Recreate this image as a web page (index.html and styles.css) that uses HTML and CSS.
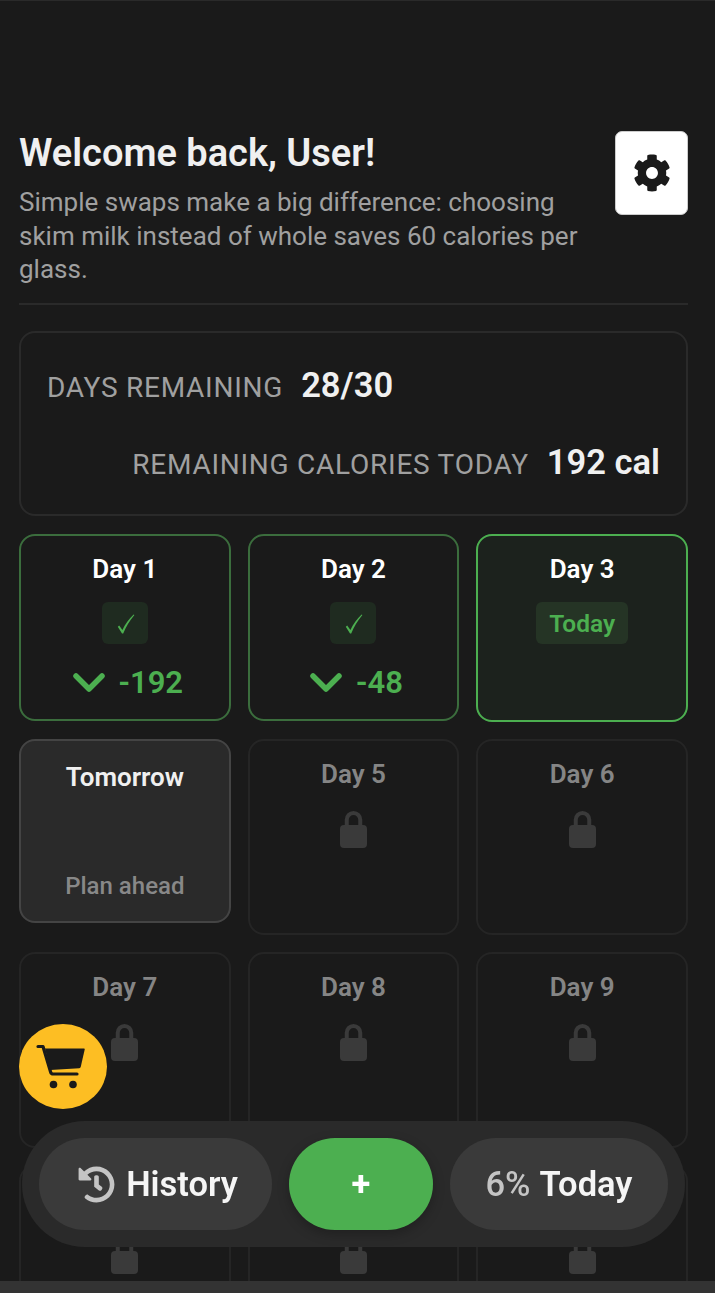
FILE: index.html
```html
<!DOCTYPE html>
<html lang="en">
<head>
  <meta charset="UTF-8" />
  <meta name="viewport" content="width=device-width, initial-scale=1" />
  <title>Dashboard</title>
  <link rel="stylesheet" href="styles.css">
</head>
<body>
  <div class="page">
    <header class="top">
      <div class="top-text">
        <h1>Welcome back, User!</h1>
        <p>Simple swaps make a big difference: choosing skim milk instead of whole saves 60 calories per glass.</p>
      </div>
      <button class="settings" aria-label="Settings">
        <svg viewBox="0 0 512 512" width="38" height="38"><path fill="#1a1a1a" d="M487.4 315.7l-42.6-24.6c4.3-23.2 4.3-47 0-70.2l42.6-24.6c4.9-2.8 7.1-8.6 5.5-14-11.1-35.6-30-67.8-54.7-94.6-3.8-4.1-10-5.1-14.8-2.3L380.8 110c-17.9-15.4-38.5-27.3-60.8-35.1V25.8c0-5.6-3.9-10.5-9.4-11.7-36.7-8.2-74.3-7.8-109.2 0-5.5 1.2-9.4 6.1-9.4 11.7V75c-22.2 7.9-42.8 19.8-60.8 35.1L88.7 85.5c-4.9-2.8-11-1.9-14.8 2.3-24.7 26.7-43.6 58.9-54.7 94.6-1.7 5.4.6 11.2 5.5 14L67.3 221c-4.3 23.2-4.3 47 0 70.2l-42.6 24.6c-4.9 2.8-7.1 8.6-5.5 14 11.1 35.6 30 67.8 54.7 94.6 3.8 4.1 10 5.1 14.8 2.3l42.6-24.6c17.9 15.4 38.5 27.3 60.8 35.1v49.2c0 5.6 3.9 10.5 9.4 11.7 36.7 8.2 74.3 7.8 109.2 0 5.5-1.2 9.4-6.1 9.4-11.7v-49.2c22.2-7.9 42.8-19.8 60.8-35.1l42.6 24.6c4.9 2.8 11 1.9 14.8-2.3 24.7-26.7 43.6-58.9 54.7-94.6 1.5-5.5-.7-11.3-5.6-14.1zM256 336c-44.1 0-80-35.9-80-80s35.9-80 80-80 80 35.9 80 80-35.9 80-80 80z"/></svg>
      </button>
    </header>

    <section class="stats">
      <div class="stat stat-left"><span class="stat-label">Days remaining</span><span class="stat-value">28/30</span></div>
      <div class="stat stat-right"><span class="stat-label">Remaining calories today</span><span class="stat-value">192 cal</span></div>
    </section>

    <section class="days">
      <div class="day day-done">
        <div class="day-title">Day 1</div>
        <div class="check"><svg viewBox="0 0 18 20" width="18" height="20"><path d="M.8 12.800 2.200 11.600 5.400 16C8 10 12 5 16.600.4L17.400 1C12.500 7 8.800 13 6.200 19.600H5z"/></svg></div>
        <div class="delta"><svg class="chev" viewBox="0 0 32 19" width="32" height="19"><path d="M3 3l13 13L29 3"/></svg><span>-192</span></div>
      </div>
      <div class="day day-done">
        <div class="day-title">Day 2</div>
        <div class="check"><svg viewBox="0 0 18 20" width="18" height="20"><path d="M.8 12.800 2.200 11.600 5.400 16C8 10 12 5 16.600.4L17.400 1C12.500 7 8.800 13 6.200 19.600H5z"/></svg></div>
        <div class="delta"><svg class="chev" viewBox="0 0 32 19" width="32" height="19"><path d="M3 3l13 13L29 3"/></svg><span>-48</span></div>
      </div>
      <div class="day day-today">
        <div class="day-title">Day 3</div>
        <div class="today-tag">Today</div>
      </div>

      <div class="day day-next">
        <div class="day-title">Tomorrow</div>
        <div class="plan">Plan ahead</div>
      </div>
      <div class="day day-locked">
        <div class="day-title">Day 5</div>
        <svg class="lock" viewBox="0 0 27 37" width="27" height="37"><use href="#lock-shape"/></svg>
      </div>
      <div class="day day-locked">
        <div class="day-title">Day 6</div>
        <svg class="lock" viewBox="0 0 27 37" width="27" height="37"><use href="#lock-shape"/></svg>
      </div>

      <div class="day day-locked">
        <div class="day-title">Day 7</div>
        <svg class="lock" viewBox="0 0 27 37" width="27" height="37"><use href="#lock-shape"/></svg>
      </div>
      <div class="day day-locked">
        <div class="day-title">Day 8</div>
        <svg class="lock" viewBox="0 0 27 37" width="27" height="37"><use href="#lock-shape"/></svg>
      </div>
      <div class="day day-locked">
        <div class="day-title">Day 9</div>
        <svg class="lock" viewBox="0 0 27 37" width="27" height="37"><use href="#lock-shape"/></svg>
      </div>

      <div class="day day-locked">
        <div class="day-title">Day 10</div>
        <svg class="lock" viewBox="0 0 27 37" width="27" height="37"><use href="#lock-shape"/></svg>
      </div>
      <div class="day day-locked">
        <div class="day-title">Day 11</div>
        <svg class="lock" viewBox="0 0 27 37" width="27" height="37"><use href="#lock-shape"/></svg>
      </div>
      <div class="day day-locked">
        <div class="day-title">Day 12</div>
        <svg class="lock" viewBox="0 0 27 37" width="27" height="37"><use href="#lock-shape"/></svg>
      </div>
    </section>
  </div>
  <div class="strip"></div>

  <!-- floating stuff -->
  <button class="cart" aria-label="Shopping list">
    <svg viewBox="0 0 50 46" width="50" height="46">
      <path class="cart-line" d="M2 2.500h5l7.600 25.500c.4 1.300 1.200 2 2.500 2H41"/>
      <path d="M9 4.500h38.800c.6 0 1 .5.900 1.100l-4 17.500c-.2.700-.7 1.100-1.400 1.200l-29 1.700z"/>
      <circle cx="17.500" cy="40.500" r="3.800"/>
      <circle cx="37" cy="40.500" r="3.800"/>
    </svg>
  </button>

  <nav class="bar">
    <button class="pill pill-history">
      <svg viewBox="0 0 512 512" width="37" height="37"><path fill="#c4c4c4" d="M504 255.531c.253 136.64-111.18 248.372-247.82 248.468-59.015.042-113.223-20.53-155.822-54.911-11.077-8.94-11.905-25.541-1.839-35.607l11.267-11.267c8.609-8.609 22.353-9.551 31.891-1.984C173.062 425.135 212.781 440 256 440c101.705 0 184-82.311 184-184 0-101.705-82.311-184-184-184-48.814 0-93.149 18.969-126.068 49.932l50.754 50.754c10.08 10.08 2.941 27.314-11.313 27.314H24c-8.837 0-16-7.163-16-16V38.627c0-14.254 17.234-21.393 27.314-11.314l49.372 49.372C129.209 34.136 189.552 8 256 8c136.81 0 247.747 110.78 248 247.531zm-180.912 78.784l9.823-12.63c8.138-10.463 6.253-25.542-4.21-33.679L288 256.349V152c0-13.255-10.745-24-24-24h-16c-13.255 0-24 10.745-24 24v135.651l65.409 50.874c10.463 8.137 25.541 6.253 33.679-4.21z"/></svg>
      <span>History</span>
    </button>
    <button class="pill pill-add">+</button>
    <button class="pill pill-today"><span class="pct">6%</span> Today</button>
  </nav>

  <svg class="defs" width="0" height="0">
    <symbol id="lock-shape" viewBox="0 0 27 37">
      <path fill="none" stroke="#3a3a3a" stroke-width="4" d="M6.750 16V8.750a6.750 6.750 0 0 1 13.500 0V16"/>
      <rect x="0" y="14" width="27" height="23" rx="4" fill="#3a3a3a"/>
    </symbol>
  </svg>
</body>
</html>
```

FILE: styles.css
```css
* {
  box-sizing: border-box;
}
html,
body {
  margin: 0;
  height: 100%;
}
body {
  display: flex;
  flex-direction: column;
  height: 1293px;
  overflow: hidden;
  background: #1a1a1a;
  border-top: 1px solid #2a2a2a;
  color: #f0f0f0;
  font-family: Roboto, sans-serif;
}
button {
  font-family: inherit;
  border: none;
  cursor: pointer;
}
.page {
  flex: 1;
  min-height: 0;
  overflow: hidden;
  padding: 130px 27px 0 19px;
}
.strip {
  height: 12px;
  flex-shrink: 0;
  background: #333;
}
.defs {
  position: absolute;
}

/* header */
.top {
  display: flex;
  justify-content: space-between;
  align-items: flex-start;
  gap: 20px;
  padding-bottom: 16px;
  border-bottom: 2px solid #2a2a2a;
}
.top h1 {
  margin: 0 0 11px;
  font-size: 38px;
  line-height: 44px;
  font-weight: 600;
  color: #f0f0f0;
}
.top p {
  margin: 0;
  font-size: 26px;
  line-height: 33.500px;
  color: #a0a0a0;
}
.settings {
  flex-shrink: 0;
  display: flex;
  align-items: center;
  justify-content: center;
  width: 73px;
  height: 84px;
  padding: 0;
  background: #fff;
  border: 1px solid #ccc;
  border-radius: 7px;
}

/* stats card */
.stats {
  margin-top: 26px;
  height: 185px;
  padding: 32px 26px 14px;
  border: 2px solid #2a2a2a;
  border-radius: 16px;
  display: flex;
  flex-direction: column;
  gap: 37px;
}
.stat {
  display: flex;
  align-items: baseline;
  gap: 18px;
}
.stat-right {
  justify-content: flex-end;
}
.stat-label {
  font-size: 28px;
  letter-spacing: 0.75px;
  color: #a0a0a0;
  text-transform: uppercase;
}
.stat-value {
  font-size: 34.500px;
  font-weight: 600;
  color: #f0f0f0;
}

/* day grid */
.days {
  margin-top: 18px;
  display: grid;
  grid-template-columns: repeat(3, 1fr);
  gap: 17px;
}
.day {
  display: flex;
  flex-direction: column;
  align-items: center;
  border: 2px solid #2a2a2a;
  border-radius: 16px;
  padding: 17px 10px;
}
.day-title {
  font-size: 26px;
  line-height: 32px;
  font-weight: 600;
  color: #fff;
}
.day-done {
  height: 187px;
  border-color: #3b6d3d;
}
.check {
  width: 46px;
  height: 45px;
  margin-top: 17px;
  display: flex;
  align-items: center;
  justify-content: center;
  background: #1f2b20;
  border-radius: 6px;
}
.check svg {
  fill: #4caf50;
  margin-left: 2px;
  margin-top: 3px;
}
.delta {
  margin-top: 20px;
  margin-left: 6px;
  display: flex;
  align-items: center;
  gap: 14px;
  font-size: 31px;
  line-height: 38px;
  font-weight: 600;
  color: #4caf50;
}
.chev {
  fill: none;
  stroke: #4caf50;
  stroke-width: 5.500;
  stroke-linecap: round;
  stroke-linejoin: round;
}
.day-today {
  height: 188px;
  background: #1c221d;
  border-color: #4caf50;
}
.today-tag {
  margin-top: 17px;
  padding: 4px 13px 2px;
  background: #253425;
  border-radius: 6px;
  color: #4caf50;
  font-size: 24.500px;
  line-height: 36px;
  font-weight: 600;
}
.day-next {
  align-self: start;
  height: 184px;
  padding: 20px 10px;
  justify-content: space-between;
  background: #2a2a2a;
  border-color: #444;
}
.day-next .day-title {
  color: #f0f0f0;
}
.plan {
  font-size: 24px;
  line-height: 30px;
  font-weight: 500;
  color: #888;
}
.day-locked {
  min-height: 196px;
  border-color: #252525;
}
.day-locked .day-title {
  color: #858585;
}
.lock {
  margin-top: 21px;
}

/* overlays */
.cart {
  position: fixed;
  left: 19px;
  top: 1024px;
  width: 88px;
  height: 85px;
  padding: 0 4px 0 0;
  display: flex;
  align-items: center;
  justify-content: center;
  border-radius: 50%;
  background: #fdbe23;
}
.cart svg {
  fill: #1a1a1a;
}
.cart-line {
  fill: none;
  stroke: #1a1a1a;
  stroke-width: 3.200;
  stroke-linecap: round;
  stroke-linejoin: round;
}
.bar {
  position: fixed;
  left: 22px;
  top: 1121px;
  width: 663px;
  height: 126px;
  padding: 17px;
  display: flex;
  gap: 17px;
  background: #2a2a2a;
  border-radius: 63px;
}
.pill {
  height: 92px;
  display: flex;
  align-items: center;
  justify-content: center;
  gap: 12px;
  border-radius: 46px;
  background: #3a3a3a;
  color: #f5f5f5;
  font-size: 34.500px;
  font-weight: 600;
}
.pill-history {
  width: 233px;
  gap: 11px;
  padding: 0 0 0 5px;
}
.pill-add {
  width: 144px;
  background: #4caf50;
  color: #fff;
  font-weight: 700;
  box-shadow: 0 4px 12px rgba(0, 0, 0, 0.25);
}
.pill-today {
  width: 218px;
  gap: 9px;
}
.pct {
  color: #c4c4c4;
  font-weight: 500;
}
```
